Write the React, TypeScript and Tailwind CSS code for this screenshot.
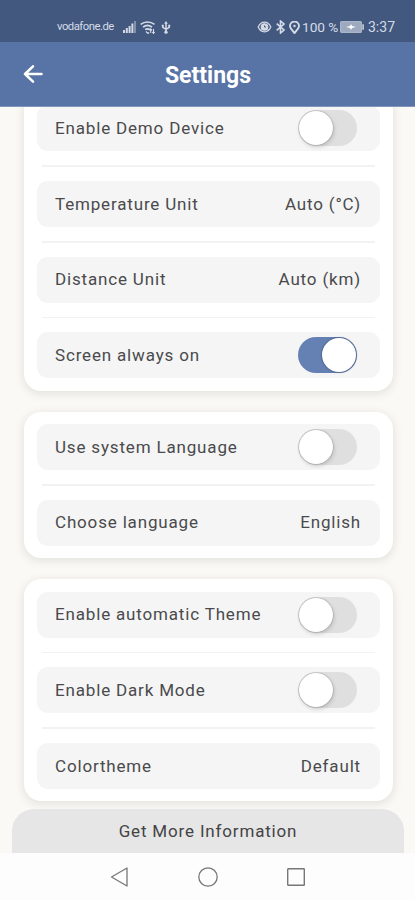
import React, { useState } from "react";

function Toggle({ initial = false }: { initial?: boolean }) {
  const [on, setOn] = useState(initial);
  return (
    <button
      role="switch"
      aria-checked={on}
      onClick={() => setOn(!on)}
      className={`mr-[4px] flex h-9 w-[59px] shrink-0 items-center rounded-full ${
        on ? "justify-end bg-[#6581b3] pr-[1px]" : "justify-start bg-[#dfdfdf] pl-[0.5px]"
      }`}
    >
      <span
        className={`size-[34px] rounded-full bg-white ${
          on
            ? "shadow-[0_0_1px_1px_rgba(60,75,115,0.45)]"
            : "shadow-[0_0_1px_0.5px_rgba(0,0,0,0.2),1px_2px_4px_rgba(0,0,0,0.16)]"
        }`}
      />
    </button>
  );
}

function Row({ label, children }: { label: string; children: React.ReactNode }) {
  return (
    <div className="flex h-[46px] items-center justify-between rounded-[11px] bg-[#f5f5f5] pr-[19px] pl-[18px]">
      <span className="pt-[0.4px]">{label}</span>
      {children}
    </div>
  );
}

function Value({ children }: { children: React.ReactNode }) {
  return <span className="pt-[0.4px]">{children}</span>;
}

function Divider() {
  return (
    <div className="flex h-[29.7px] items-center px-[5px]">
      <div className="h-[1.5px] w-full bg-[#f2f2f2]" />
    </div>
  );
}

function Card({ children }: { children: React.ReactNode }) {
  return (
    <section className="rounded-[17px] bg-white px-[13px] pt-[12.4px] pb-[12.4px] shadow-[0_2px_8px_1px_rgba(90,90,80,0.14)]">
      {children}
    </section>
  );
}

function StatusBar() {
  return (
    <div className="flex h-[42px] items-end justify-between bg-[#42587f] pr-[19px] pb-[7px] pl-[57px] text-[#d5dbe6]">
      <div className="flex h-4 items-center">
        <span className="w-[66px] text-[11.3px] tracking-[-0.5px]">vodafone.de</span>
        <svg width="13" height="12" viewBox="0 0 13 12" fill="currentColor">
          <path d="M0 9h2v3H0zM2.8 7h2v5h-2zM5.6 5h2v7h-2zM8.4 2.5h2V12h-2z" />
          <path d="M11.2 0h1.6v12h-1.6z" opacity=".55" />
        </svg>
        <svg className="ml-[4px]" width="16" height="13" viewBox="0 0 16 13" fill="none" stroke="currentColor" strokeWidth="1.6">
          <path d="M.7 3.4C4.6.1 10.4.1 14.5 3.4M3 6.2c2.8-2.2 6.2-2.2 9 0M5.2 8.7c1.5-1.1 3.2-1.1 4.7 0" />
          <path d="M6 10.5 8 12.5l1-1M10.7 8v4M9.5 9.4l1.2-1.5 1.2 1.5M13.5 8v4.5M12.3 11l1.2 1.5 1.2-1.5" strokeWidth="1.1" />
        </svg>
        <svg className="ml-[5px]" width="10" height="13" viewBox="0 0 10 14" fill="none" stroke="currentColor" strokeWidth="1.6">
          <path d="M5 2v10M1.5 4.8v2.1L5 9l3.5-2.1V4.8" />
          <path d="M5 0 7 3H3zM.4 4h2.2v2H.4zM7.4 4h2.2v2H7.4z" fill="currentColor" stroke="none" />
          <circle cx="5" cy="12" r="1.8" fill="currentColor" stroke="none" />
        </svg>
      </div>
      <div className="flex h-4 items-center">
        <svg width="15" height="12" viewBox="0 0 14 12" fill="none" stroke="currentColor" strokeWidth="1.3">
          <path d="M.7 6C3.6-.4 10.4-.4 13.3 6 10.4 12.4 3.6 12.4.7 6Z" />
          <circle cx="7" cy="6" r="3.2" fill="currentColor" />
          <path d="M7 4.5V6h1.5" stroke="#42587f" strokeWidth="1" />
        </svg>
        <svg className="ml-[4px]" width="9" height="14" viewBox="0 0 9 14" fill="none" stroke="currentColor" strokeWidth="1.6">
          <path d="M.7 3.7 8 10l-3.5 3V1L8 4 .7 10.3" />
        </svg>
        <svg className="ml-[4px]" width="11" height="13" viewBox="0 0 11 13" fill="none" stroke="currentColor" strokeWidth="1.9">
          <path d="M5.5 12C3 9.3 1 7.3 1 5.1a4.5 4.5 0 0 1 9 0c0 2.2-2 4.2-4.5 6.9Z" />
          <circle cx="5.5" cy="5" r="1.2" fill="currentColor" stroke="none" />
        </svg>
        <span className="ml-[2px] w-[38px] text-[13.7px] tracking-[-0.05px] whitespace-nowrap">100 %</span>
        <svg width="24" height="12" viewBox="0 0 24 12">
          <rect x=".6" y=".6" width="20.8" height="10.8" rx="1" fill="#9ca9bf" stroke="#aab5c8" strokeWidth="1.2" />
          <path d="M22.2 3.3H24v5.4h-1.8z" fill="#b7c1d0" />
          <path d="m6 6 4-1 1-2 1 2 4 1-4 1-1 2-1-2z" fill="#fff" />
        </svg>
        <span className="ml-[4px] w-[28px] text-[14px]">3:37</span>
      </div>
    </div>
  );
}

export default function App() {
  return (
    <div
      className="flex h-[900px] w-full flex-col overflow-hidden bg-[#faf9f5] text-[17px] tracking-[0.83px] text-[#4a4a4c]"
      style={{ fontFamily: 'Roboto, "Liberation Sans", sans-serif' }}
    >
      <div className="z-10 shrink-0 tracking-normal">
        <StatusBar />
        <header className="grid h-[65px] grid-cols-[1fr_auto_1fr] items-center border-b border-[#8096bd] bg-[#5873a5] text-white">
          <button aria-label="Back" className="pl-[23px]">
            <svg width="20" height="18" viewBox="0 0 20 18" fill="none" stroke="currentColor" strokeWidth="2.5" strokeLinecap="round" strokeLinejoin="round">
              <path d="M18.5 9H2M10 1.3 2 9l8 7.7" />
            </svg>
          </button>
          <h1 className="pt-[4px] pl-[1px] text-[23px] font-bold">Settings</h1>
        </header>
      </div>
      <main className="flex h-[746px] shrink-0 flex-col overflow-hidden">
        <div className="-mt-[14px] flex flex-col gap-[21px] pr-[22px] pl-6">
          <Card>
            <Row label="Enable Demo Device"><Toggle /></Row>
            <Divider />
            <Row label="Temperature Unit"><Value>Auto (°C)</Value></Row>
            <Divider />
            <Row label="Distance Unit"><Value>Auto (km)</Value></Row>
            <Divider />
            <Row label="Screen always on"><Toggle initial /></Row>
          </Card>
          <Card>
            <Row label="Use system Language"><Toggle /></Row>
            <Divider />
            <Row label="Choose language"><Value>English</Value></Row>
          </Card>
          <Card>
            <Row label="Enable automatic Theme"><Toggle /></Row>
            <Divider />
            <Row label="Enable Dark Mode"><Toggle /></Row>
            <Divider />
            <Row label="Colortheme"><Value>Default</Value></Row>
          </Card>
        </div>
        <button className="mt-auto mr-[11px] ml-3 h-[44px] shrink-0 rounded-t-[22px] bg-[#e6e6e6] pt-px tracking-[0.83px] text-[#434345]">
          Get More Information
        </button>
      </main>
      <nav className="flex flex-1 items-center justify-center gap-[68px] bg-[#fdfdfd] text-[#77777a]">
        <svg width="20" height="20" viewBox="0 0 20 20" fill="none" stroke="currentColor" strokeWidth="1.3" strokeLinejoin="round">
          <path d="M17 1v18L1.5 10z" />
        </svg>
        <svg width="20" height="20" viewBox="0 0 20 20" fill="none" stroke="currentColor" strokeWidth="1.3">
          <circle cx="10" cy="10" r="9.2" />
        </svg>
        <svg width="20" height="20" viewBox="0 0 20 20" fill="none" stroke="currentColor" strokeWidth="1.4">
          <rect x="1.7" y="1.7" width="16.6" height="16.6" rx=".6" />
        </svg>
      </nav>
    </div>
  );
}
